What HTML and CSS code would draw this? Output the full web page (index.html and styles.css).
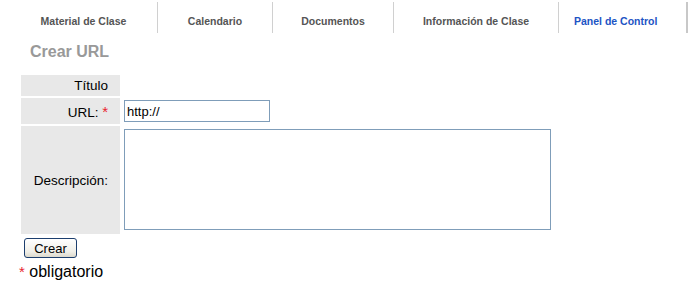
FILE: index.html
```html
<!DOCTYPE html>
<html lang="es">
<head>
  <meta charset="UTF-8" />
  <title>Crear URL</title>
  <link rel="stylesheet" href="styles.css">
</head>
<body>
  <ul class="tabs">
    <li class="tab tab-material">Material de Clase</li>
    <li class="tab tab-calendario">Calendario</li>
    <li class="tab tab-documentos">Documentos</li>
    <li class="tab tab-info">Información de Clase</li>
    <li class="tab tab-active">Panel de Control</li>
  </ul>

  <h2 class="title">Crear URL</h2>

  <form class="url-form">
    <table class="form-table">
      <tr class="row-title">
        <td class="label">Título</td>
        <td class="field"></td>
      </tr>
      <tr class="row-url">
        <td class="label">URL: <span class="req">*</span></td>
        <td class="field"><input type="text" class="url-input" value="http://"></td>
      </tr>
      <tr class="row-desc">
        <td class="label">Descripción:</td>
        <td class="field"><textarea class="desc-input"></textarea></td>
      </tr>
    </table>
    <button type="button" class="btn-crear">Crear</button>
    <p class="note"><span class="req">*</span> obligatorio</p>
  </form>
</body>
</html>
```

FILE: styles.css
```css
* {
  box-sizing: border-box;
}
body {
  margin: 0;
  font-family: 'Liberation Sans', Arial, sans-serif;
  background: #fff;
  color: #000;
}
/* Pestañas superiores */
.tabs {
  list-style: none;
  display: flex;
  margin: 2px 0 0 10px;
  padding: 0;
}
.tab {
  flex-shrink: 0;
  white-space: nowrap;
  height: 31px;
  padding-top: 13px;
  border-right: 1px solid #d0d0d0;
  text-align: center;
  font-size: 10.5px;
  line-height: 13px;
  font-weight: bold;
  color: #555;
}
.tab-material { width: 148px; }
.tab-calendario { width: 115px; }
.tab-documentos { width: 121px; }
.tab-info { width: 165px; }
.tab-active {
  width: 129px;
  padding-left: 15px;
  text-align: left;
  color: #1d54c4;
  border-right: 2px solid #c8c8c8;
}
.title {
  margin: 9px 0 0 30px;
  font-size: 16px;
  line-height: 19px;
  font-weight: bold;
  color: #999;
}
/* Formulario */
.url-form {
  margin: 12px 0 0 19px;
}
.form-table {
  border-spacing: 2px;
  font-size: 13.5px;
}
.label {
  width: 99px;
  padding: 0 12px 0 0;
  background: #e8e8e8;
  text-align: right;
  color: #000;
}
.row-title .label {
  height: 21px;
}
.row-url .label {
  height: 26px;
}
.field {
  padding: 2px 0 0 2px;
  vertical-align: top;
}
.req {
  color: #e8232f;
  font-size: 15px;
}
.url-input {
  display: block;
  width: 146px;
  height: 22px;
  margin: 0;
  padding: 1px 2px;
  border: 1px solid #7f9db9;
  font-family: 'Liberation Sans', Arial, sans-serif;
  font-size: 13px;
}
.desc-input {
  display: block;
  width: 427px;
  height: 101px;
  margin: 1px 0 4px;
  border: 1px solid #7f9db9;
  resize: none;
}
.btn-crear {
  display: block;
  margin: 2px 0 0 5px;
  width: 53px;
  height: 20px;
  padding: 0;
  border: 1px solid #1c3e6e;
  border-radius: 3px;
  background: linear-gradient(#fff, #f0efe8 70%, #dcd9cc);
  font-family: 'Liberation Sans', Arial, sans-serif;
  font-size: 13px;
  color: #000;
}
.note {
  margin: 4px 0 0 0;
  font-size: 16px;
  line-height: 19px;
}
.note .req {
  font-size: 15px;
  vertical-align: top;
}
```
